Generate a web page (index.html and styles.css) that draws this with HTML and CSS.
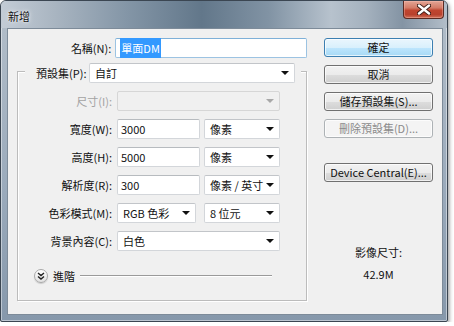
FILE: index.html
```html
<!DOCTYPE html>
<html lang="zh-Hant">
<head>
    <meta charset="UTF-8">
    <title>新增</title>
    <link rel="stylesheet" href="styles.css">
</head>
<body>

<div class="window">
    <div class="titlebar">
        <span class="title">新增</span>
        <div class="close-btn">
            <svg width="14" height="11" viewBox="0 0 14 11">
                <path d="M2 1.5 L12 9.5 M12 1.5 L2 9.5" stroke="#3a1a14" stroke-width="4.2" stroke-linecap="round"/>
                <path d="M2 1.5 L12 9.5 M12 1.5 L2 9.5" stroke="#fff" stroke-width="2.4" stroke-linecap="round"/>
            </svg>
        </div>
    </div>

    <div class="client">
        <div class="left-col">
            <div class="row name-row">
                <span class="label">名稱(N):</span>
                <div class="field name-field"><span class="selected">單面DM</span></div>
            </div>

            <div class="group">
                <div class="legend">
                    <span class="legend-label">預設集(P):</span>
                    <div class="select preset-select">自訂<i class="arrow"></i></div>
                </div>

                <div class="row">
                    <span class="label disabled">尺寸(I):</span>
                    <div class="select wide disabled-select"><i class="arrow"></i></div>
                </div>
                <div class="row">
                    <span class="label">寬度(W):</span>
                    <div class="field num">3000</div>
                    <div class="select unit">像素<i class="arrow"></i></div>
                </div>
                <div class="row">
                    <span class="label">高度(H):</span>
                    <div class="field num">5000</div>
                    <div class="select unit">像素<i class="arrow"></i></div>
                </div>
                <div class="row">
                    <span class="label">解析度(R):</span>
                    <div class="field num">300</div>
                    <div class="select unit">像素 / 英寸<i class="arrow"></i></div>
                </div>
                <div class="row">
                    <span class="label">色彩模式(M):</span>
                    <div class="select mode">RGB 色彩<i class="arrow"></i></div>
                    <div class="select unit bits">8 位元<i class="arrow"></i></div>
                </div>
                <div class="row">
                    <span class="label">背景內容(C):</span>
                    <div class="select wide">白色<i class="arrow"></i></div>
                </div>

                <div class="advanced">
                    <span class="chevron">
                        <svg width="8" height="8" viewBox="0 0 8 8">
                            <path d="M1 1 L4 3.5 L7 1 M1 4.5 L4 7 L7 4.5" fill="none" stroke="#222" stroke-width="1.4"/>
                        </svg>
                    </span>
                    <span class="adv-text">進階</span>
                    <span class="adv-line"></span>
                </div>
            </div>
        </div>

        <div class="right-col">
            <div class="btn default">確定</div>
            <div class="btn">取消</div>
            <div class="btn">儲存預設集(S)...</div>
            <div class="btn off">刪除預設集(D)...</div>
            <div class="btn device">Device Central(E)...</div>

            <div class="info-title">影像尺寸:</div>
            <div class="info-value">42.9M</div>
        </div>
    </div>
</div>

</body>
</html>
```

FILE: styles.css
```css
body {
    margin: 0;
    padding: 0;
    background-color: #ffffff;
    font-family: "Noto Sans CJK TC", "Noto Sans", sans-serif;
    font-size: 11px;
    color: #111;
}

.window {
    width: 446px;
    height: 320px;
    border: 1px solid #3b4652;
    border-radius: 6px 6px 2px 2px;
    background: linear-gradient(to bottom, #b4bfca, #9aaabb 60%, #8698ab);
    box-shadow: inset 0 0 0 1px rgba(255, 255, 255, 0.45), 1px 2px 4px rgba(0, 0, 0, 0.45);
    display: flex;
    flex-direction: column;
}

.titlebar {
    height: 27px;
    display: flex;
    align-items: flex-start;
    justify-content: space-between;
    border-radius: 5px 5px 0 0;
    background: linear-gradient(90deg, #c3ccd6 0%, #a9b5c1 12%, #8496a7 28%, #62778a 45%, #8193a4 60%, #b7c2cd 74%, #a4b1be 82%, #8494a4 90%, #b3bec9 100%);
}

.title {
    margin: 7px 0 0 7px;
    font-size: 11px;
    line-height: 16px;
    color: #111;
    text-shadow: 0 0 5px rgba(255, 255, 255, 0.9), 0 0 2px rgba(255, 255, 255, 0.8);
}

.close-btn {
    width: 41px;
    height: 18px;
    margin-right: 3px;
    border: 1px solid #5a2a22;
    border-top: none;
    border-radius: 0 0 4px 4px;
    box-sizing: border-box;
    background: linear-gradient(to bottom, #e4a595 0%, #d47c68 40%, #c0452f 55%, #b8412d 80%, #d0715a 100%);
    box-shadow: inset 0 0 0 1px rgba(255, 200, 190, 0.35);
    display: flex;
    align-items: center;
    justify-content: center;
}

.client {
    margin: 0 4px 6px 6px;
    flex: 1;
    border: 1px solid #7d8b99;
    background-color: #f0f0f0;
    display: flex;
}

.left-col {
    padding: 9px 0 0 9px;
    width: 290px;
}

.row {
    display: flex;
    height: 20px;
    margin-top: 8px;
}

.label {
    width: 94px;
    margin-right: 5px;
    text-align: right;
    line-height: 20px;
    white-space: nowrap;
}

.label.disabled {
    color: #a3a3a3;
}

.name-row {
    margin-top: 0;
}

.name-row .label {
    width: 95px;
    margin-right: 4px;
}

.field {
    height: 20px;
    box-sizing: border-box;
    background: #fff;
    border: 1px solid #d3d6da;
    border-top-color: #b7bbbf;
    border-radius: 2px;
    padding-left: 3px;
    line-height: 18px;
    white-space: nowrap;
}

.name-field {
    width: 193px;
    padding-left: 4px;
    border-color: #9cc3e2;
    border-top-color: #7eb0d8;
}

.selected {
    background-color: #3399ff;
    color: #fff;
    padding: 2px 1px 2px 1px;
}

.num {
    width: 83px;
}

.select {
    position: relative;
    height: 20px;
    box-sizing: border-box;
    background: #fff;
    border: 1px solid #d3d6da;
    border-top-color: #c2c5c9;
    border-radius: 2px;
    padding-left: 5px;
    line-height: 18px;
    white-space: nowrap;
}

.arrow {
    position: absolute;
    right: 5px;
    top: 7px;
    width: 0;
    height: 0;
    border-left: 4px solid transparent;
    border-right: 4px solid transparent;
    border-top: 4px solid #111;
}

.unit {
    width: 76px;
    margin-left: 4px;
}

.mode {
    width: 79px;
}

.bits {
    margin-left: 8px;
}

.wide {
    width: 163px;
}

.disabled-select {
    background: #f0f0f0;
    border-color: #d6d6d6;
}

.disabled-select .arrow {
    border-top-color: #a8a8a8;
}

.group {
    margin-top: 13px;
    width: 288px;
    height: 228px;
    border: 1px solid #bcbcbc;
    box-shadow: 1px 1px 0 #fff, inset 1px 1px 0 #fff;
}

.legend {
    display: flex;
    margin: -9px 0 0 7px;
    width: 265px;
    padding-left: 11px;
    background-color: #f0f0f0;
    height: 20px;
}

.legend-label {
    width: 53px;
    line-height: 20px;
    white-space: nowrap;
}

.preset-select {
    width: 206px;
}

.advanced {
    display: flex;
    align-items: center;
    margin: 18px 0 0 16px;
    height: 14px;
}

.chevron {
    width: 12px;
    height: 12px;
    border: 1px solid #a9a9a9;
    border-radius: 50%;
    background: linear-gradient(to bottom, #ffffff, #e2e2e2);
    box-shadow: 0 1px 1px rgba(0, 0, 0, 0.15);
    display: flex;
    align-items: center;
    justify-content: center;
}

.adv-text {
    margin-left: 5px;
    line-height: 14px;
}

.adv-line {
    margin-left: 5px;
    width: 192px;
    height: 1px;
    background-color: #9a9a9a;
    border-bottom: 1px solid #fff;
}

.right-col {
    margin-left: 17px;
    padding-top: 9px;
    width: 109px;
    display: flex;
    flex-direction: column;
    align-items: center;
}

.btn {
    width: 109px;
    height: 19px;
    box-sizing: border-box;
    margin-bottom: 8px;
    border: 1px solid #707070;
    border-radius: 3px;
    background: linear-gradient(to bottom, #f2f2f2 0%, #ebebeb 50%, #dddddd 51%, #cfcfcf 100%);
    box-shadow: inset 0 0 0 1px rgba(255, 255, 255, 0.7);
    text-align: center;
    line-height: 17px;
    white-space: nowrap;
}

.btn.default {
    border-color: #3c7fb1;
    background: linear-gradient(to bottom, #eaf6fd 0%, #d9f0fc 50%, #bee6fd 51%, #a7d9f5 100%);
}

.btn.off {
    border-color: #adb2b5;
    background: #f4f4f4;
    color: #8a8a8a;
}

.btn.device {
    margin-top: 17px;
}

.info-title {
    margin-top: 54px;
    line-height: 16px;
}

.info-value {
    margin-top: 6px;
    line-height: 16px;
}
```
